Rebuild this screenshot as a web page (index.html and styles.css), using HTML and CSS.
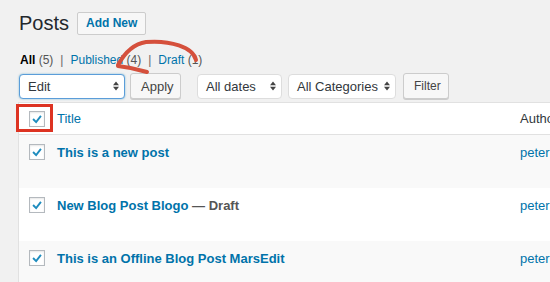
FILE: index.html
```html
<!DOCTYPE html>
<html lang="en">
<head>
    <meta charset="UTF-8">
    <meta name="viewport" content="width=device-width, initial-scale=1.0">
    <title>Posts</title>
    <link rel="stylesheet" href="styles.css">
</head>
<body>
    <div class="wrap">
        <div class="page-head">
            <h1>Posts</h1>
            <a class="add-new" href="#">Add New</a>
        </div>

        <ul class="subsubsub">
            <li class="current">All <span class="count">(5)</span></li>
            <li class="sep">|</li>
            <li><a href="#">Published <span class="count">(4)</span></a></li>
            <li class="sep">|</li>
            <li><a href="#">Draft <span class="count">(1)</span></a></li>
        </ul>

        <div class="tablenav">
            <div class="select select-edit">Edit <svg class="updown" viewBox="0 0 8 12"><path d="M4 0 L8 5 H0 Z M0 7 H8 L4 12 Z"/></svg></div>
            <button class="btn btn-apply">Apply</button>
            <div class="select select-dates">All dates <svg class="updown" viewBox="0 0 8 12"><path d="M4 0 L8 5 H0 Z M0 7 H8 L4 12 Z"/></svg></div>
            <div class="select select-cats">All Categories <svg class="updown" viewBox="0 0 8 12"><path d="M4 0 L8 5 H0 Z M0 7 H8 L4 12 Z"/></svg></div>
            <button class="btn btn-filter">Filter</button>
        </div>

        <div class="posts">
            <div class="row head-row">
                <div class="cb">
                    <span class="cb-wrap">
                        <span class="checkbox"><svg viewBox="0 0 16 16"><polyline points="3.5,8 7,11.5 12.5,4.5"/></svg></span>
                        <span class="red-box"></span>
                    </span>
                </div>
                <div class="col-title"><a href="#">Title</a></div>
                <div class="col-author">Author</div>
            </div>
            <div class="row alt">
                <div class="cb"><span class="checkbox"><svg viewBox="0 0 16 16"><polyline points="3.5,8 7,11.5 12.5,4.5"/></svg></span></div>
                <div class="col-title"><a class="row-title" href="#">This is a new post</a></div>
                <div class="col-author"><a href="#">peter</a></div>
            </div>
            <div class="row">
                <div class="cb"><span class="checkbox"><svg viewBox="0 0 16 16"><polyline points="3.5,8 7,11.5 12.5,4.5"/></svg></span></div>
                <div class="col-title"><a class="row-title" href="#">New Blog Post Blogo</a> <span class="state">— Draft</span></div>
                <div class="col-author"><a href="#">peter</a></div>
            </div>
            <div class="row alt">
                <div class="cb"><span class="checkbox"><svg viewBox="0 0 16 16"><polyline points="3.5,8 7,11.5 12.5,4.5"/></svg></span></div>
                <div class="col-title"><a class="row-title" href="#">This is an Offline Blog Post MarsEdit</a></div>
                <div class="col-author"><a href="#">peter</a></div>
            </div>
        </div>
    </div>

    <!-- hand-drawn arrow pointing at the bulk actions menu -->
    <svg class="arrow" width="550" height="282" viewBox="0 0 550 282">
        <path d="M196 60 C 193 47, 170 40, 146 42 C 133 44, 124 54, 118 65"/>
        <path d="M118 66 C 127 67, 137 69, 147 72"/>
    </svg>
</body>
</html>
```

FILE: styles.css
```css
body {
    margin: 0;
    background: #f1f1f1;
    font-family: "Liberation Sans", Arial, sans-serif;
    color: #23282d;
    overflow: hidden;
}
a {
    color: #0073aa;
    text-decoration: none;
}
.wrap {
    padding: 11px 0 0 18px;
}
.page-head {
    display: flex;
    align-items: center;
    gap: 8px;
    padding-left: 1px;
}
h1 {
    margin: 0;
    font-size: 20px;
    font-weight: 400;
    line-height: 24px;
    color: #23282d;
}
.add-new {
    display: block;
    height: 21px;
    line-height: 21px;
    padding: 0 8px;
    font-size: 12px;
    font-weight: bold;
    background: #f7f7f7;
    border: 1px solid #ccc;
    border-radius: 2px;
}
.subsubsub {
    display: flex;
    gap: 5px;
    list-style: none;
    margin: 16px 0 0 2px;
    padding: 0;
    font-size: 12px;
    line-height: 18px;
    color: #666;
}
.subsubsub .current {
    font-weight: bold;
    color: #000;
}
.subsubsub .current .count {
    font-weight: normal;
    color: #555;
}
.subsubsub .sep {
    margin: 0 2px;
}
.subsubsub a .count {
    color: #555;
}
.tablenav {
    display: flex;
    align-items: center;
    margin-top: 4px;
    height: 26px;
}
.select {
    box-sizing: border-box;
    display: flex;
    align-items: center;
    justify-content: space-between;
    height: 25px;
    padding: 0 5px 0 8px;
    background: #fff;
    border: 1px solid #ddd;
    border-radius: 4px;
    font-size: 13px;
    color: #32373c;
}
.updown {
    width: 6px;
    height: 10px;
    fill: #444;
}
.select-edit {
    width: 106px;
    margin-left: 1px;
    border-color: #5b9dd9;
    box-shadow: 0 0 2px rgba(30, 140, 190, 0.6);
}
.select-dates {
    width: 85px;
    margin-left: 16px;
}
.select-cats {
    width: 108px;
    margin-left: 6px;
}
.btn {
    box-sizing: border-box;
    height: 26px;
    padding: 0 10px;
    background: #f7f7f7;
    border: 1px solid #ccc;
    border-radius: 3px;
    box-shadow: 0 1px 0 #ccc;
    font-family: inherit;
    font-size: 13px;
    color: #444;
}
.btn-apply {
    width: 51px;
    margin-left: 5px;
}
.btn-filter {
    width: 46px;
    margin-left: 7px;
    font-size: 12px;
}
.posts {
    margin-top: 3px;
    border-left: 1px solid #e1e1e1;
    border-top: 1px solid #e1e1e1;
    width: 600px;
}
.row {
    display: grid;
    grid-template-columns: 38px 463px 100px;
    height: 53px;
    background: #fff;
    font-size: 13px;
}
.row.alt {
    background: #f9f9f9;
}
.head-row {
    height: 31px;
    align-items: center;
    border-bottom: 1px solid #e1e1e1;
}
.row .cb {
    padding-left: 10px;
}
.row:not(.head-row) .cb,
.row:not(.head-row) .col-title,
.row:not(.head-row) .col-author {
    padding-top: 9px;
}
.cb-wrap {
    position: relative;
    display: block;
    width: 16px;
    height: 16px;
    margin-top: 1px;
}
.checkbox {
    display: block;
    box-sizing: border-box;
    width: 16px;
    height: 16px;
    background: #fff;
    border: 1px solid #b4b9be;
    box-shadow: inset 0 1px 2px rgba(0, 0, 0, 0.1);
}
.checkbox svg {
    display: block;
    width: 14px;
    height: 14px;
    fill: none;
    stroke: #1e8cbe;
    stroke-width: 2.2;
}
.red-box {
    position: absolute;
    left: -13px;
    top: -7px;
    width: 31px;
    height: 22px;
    border: 3px solid #dd3322;
}
.col-title,
.col-author {
    line-height: 18px;
}
.row-title {
    font-size: 13px;
    font-weight: bold;
}
.state {
    font-size: 13px;
    font-weight: bold;
    color: #555;
}
.col-author {
    color: #32373c;
}
.arrow {
    position: absolute;
    left: 0;
    top: 0;
    pointer-events: none;
}
.arrow path {
    fill: none;
    stroke: #d5503c;
    stroke-width: 4;
    stroke-linecap: round;
}
```
